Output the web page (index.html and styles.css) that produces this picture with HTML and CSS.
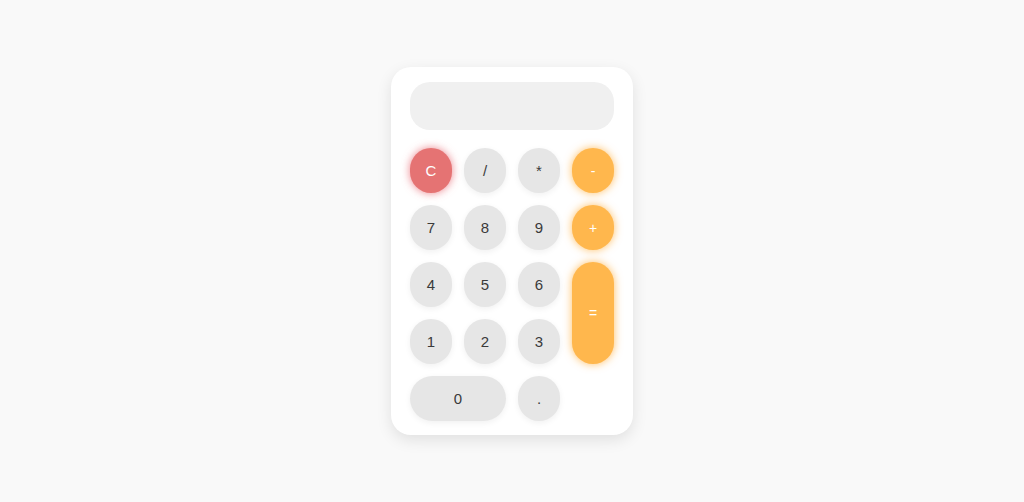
FILE: index.html
```
<!DOCTYPE html>
<html>
<head>
<meta charset="utf-8">
<link rel="stylesheet" href="styles.css">
</head>
<body>
<div class="page">
  <div class="calc">
    <div class="display"></div>
    <div class="keys">
      <button class="key clear">C</button>
      <button class="key">/</button>
      <button class="key">*</button>
      <button class="key op">-</button>
      <button class="key">7</button>
      <button class="key">8</button>
      <button class="key">9</button>
      <button class="key op">+</button>
      <button class="key">4</button>
      <button class="key">5</button>
      <button class="key">6</button>
      <button class="key op equals">=</button>
      <button class="key">1</button>
      <button class="key">2</button>
      <button class="key">3</button>
      <button class="key zero">0</button>
      <button class="key">.</button>
    </div>
  </div>
</div>
</body>
</html>
```
FILE: styles.css
```
html, body {
  margin: 0;
  padding: 0;
  background: #f9f9f9;
  font-family: "Liberation Sans", Arial, sans-serif;
}
.page {
  height: 502px;
  display: flex;
  align-items: center;
  justify-content: center;
}
.calc {
  width: 204px;
  background: #ffffff;
  border-radius: 20px;
  padding: 15px 19px 14px;
  box-shadow: 0 5px 15px rgba(0, 0, 0, 0.1);
}
.display {
  height: 48px;
  background: #f0f0f0;
  border-radius: 20px;
  margin-bottom: 18px;
}
.keys {
  display: grid;
  grid-template-columns: repeat(4, 42px);
  grid-auto-rows: 45px;
  gap: 12px 12px;
}
.key {
  border: none;
  margin: 0;
  padding: 0;
  border-radius: 25px;
  background: #e6e6e6;
  color: #3a3a3a;
  font-family: "Liberation Sans", Arial, sans-serif;
  font-size: 15px;
  box-shadow: 0 2px 6px rgba(0, 0, 0, 0.06);
}
.clear {
  background: #e57373;
  color: #ffffff;
  box-shadow: 0 0 8px rgba(229, 90, 100, 0.75);
}
.op {
  background: #ffb74d;
  color: #ffffff;
  font-size: 14px;
  box-shadow: 0 0 8px rgba(255, 170, 50, 0.75);
}
.equals {
  grid-row: span 2;
  border-radius: 22px;
}
.zero {
  grid-column: span 2;
}
```
